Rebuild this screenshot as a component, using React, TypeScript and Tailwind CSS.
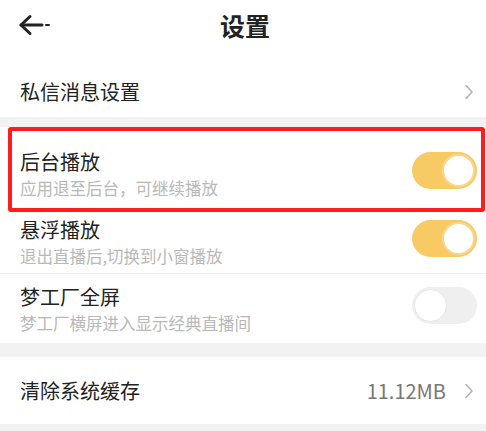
import React from "react";

const font = { fontFamily: '"Noto Sans CJK SC", "Noto Sans", sans-serif' };

function Toggle({ on }: { on: boolean }) {
  return on ? (
    <div className="w-[65px] h-[37px] rounded-full bg-[#f8ca63] flex items-center justify-end p-[2px]">
      <div className="w-[33px] h-[33px] rounded-full bg-white border-[2px] border-[#f6d88f]" />
    </div>
  ) : (
    <div className="w-[65px] h-[37px] rounded-full bg-[#efefef] flex items-center justify-start p-[2px]">
      <div className="w-[33px] h-[33px] rounded-full bg-white border border-[#e6e6e6]" />
    </div>
  );
}

function Chevron() {
  return (
    <svg width="10" height="16" viewBox="0 0 10 16" fill="none">
      <path d="M2 1.5 L8 8 L2 14.5" stroke="#b3b3b3" strokeWidth="1.6" strokeLinecap="round" strokeLinejoin="round" />
    </svg>
  );
}

function SwitchRow({ title, sub, on, pt, pb, border }: { title: string; sub: string; on: boolean; pt: string; pb: string; border?: boolean }) {
  return (
    <div className={`flex items-start justify-between pl-5 pr-[9px] bg-white ${pt} ${pb} ${border ? "border-b border-[#f1f1f1]" : ""}`}>
      <div>
        <div className="text-[20px] leading-[26px] text-[#222]">{title}</div>
        <div className="text-[16.5px] leading-[22px] mt-[2px] text-[#b8b8b8]">{sub}</div>
      </div>
      <div className="mt-[3px]">
        <Toggle on={on} />
      </div>
    </div>
  );
}

export default function App() {
  return (
    <div className="relative w-[486px] h-[431px] bg-[#f2f2f2] overflow-hidden" style={font}>
      {/* header */}
      <div className="relative h-[50px] bg-white flex items-center justify-center">
        <svg className="absolute left-[18px] top-[14px]" width="36" height="22" viewBox="0 0 36 22" fill="none">
          <path d="M12 2.5 L3 11 L12 19.5" stroke="#222" strokeWidth="3" strokeLinecap="round" strokeLinejoin="round" />
          <path d="M3 11 H24" stroke="#222" strokeWidth="3" strokeLinecap="round" />
          <path d="M28 11 H31" stroke="#222" strokeWidth="2" strokeLinecap="round" />
        </svg>
        <h1 className="text-[25px] font-bold text-[#222] leading-none pl-[4px]">设置</h1>
      </div>

      {/* private messages */}
      <div className="flex items-center justify-between pl-5 pr-[12px] pt-[30px] pb-[13px] bg-white">
        <span className="text-[20px] leading-[24px] text-[#222]">私信消息设置</span>
        <Chevron />
      </div>

      <div className="h-[10px]" />

      <div className="bg-white">
        <SwitchRow title="后台播放" sub="应用退至后台，可继续播放" on pt="pt-[22px]" pb="pb-[6px]" />
        <SwitchRow title="悬浮播放" sub="退出直播后,切换到小窗播放" on pt="pt-[12px]" pb="pb-[6px]" border />
        <SwitchRow title="梦工厂全屏" sub="梦工厂横屏进入显示经典直播间" on={false} pt="pt-[10px]" pb="pb-[9px]" />
      </div>

      <div className="h-[14px]" />

      <div className="h-[67px] flex items-center justify-between pl-5 pr-[12px] bg-white">
        <span className="text-[20px] text-[#222]">清除系统缓存</span>
        <div className="flex items-center gap-[18px]">
          <span className="text-[20px] text-[#777]">11.12MB</span>
          <Chevron />
        </div>
      </div>

      {/* annotation highlight */}
      <div className="absolute left-[8px] top-[127px] w-[477px] h-[85px] border-[4px] border-[#ff1c1c] rounded-[3px] pointer-events-none" />
    </div>
  );
}
